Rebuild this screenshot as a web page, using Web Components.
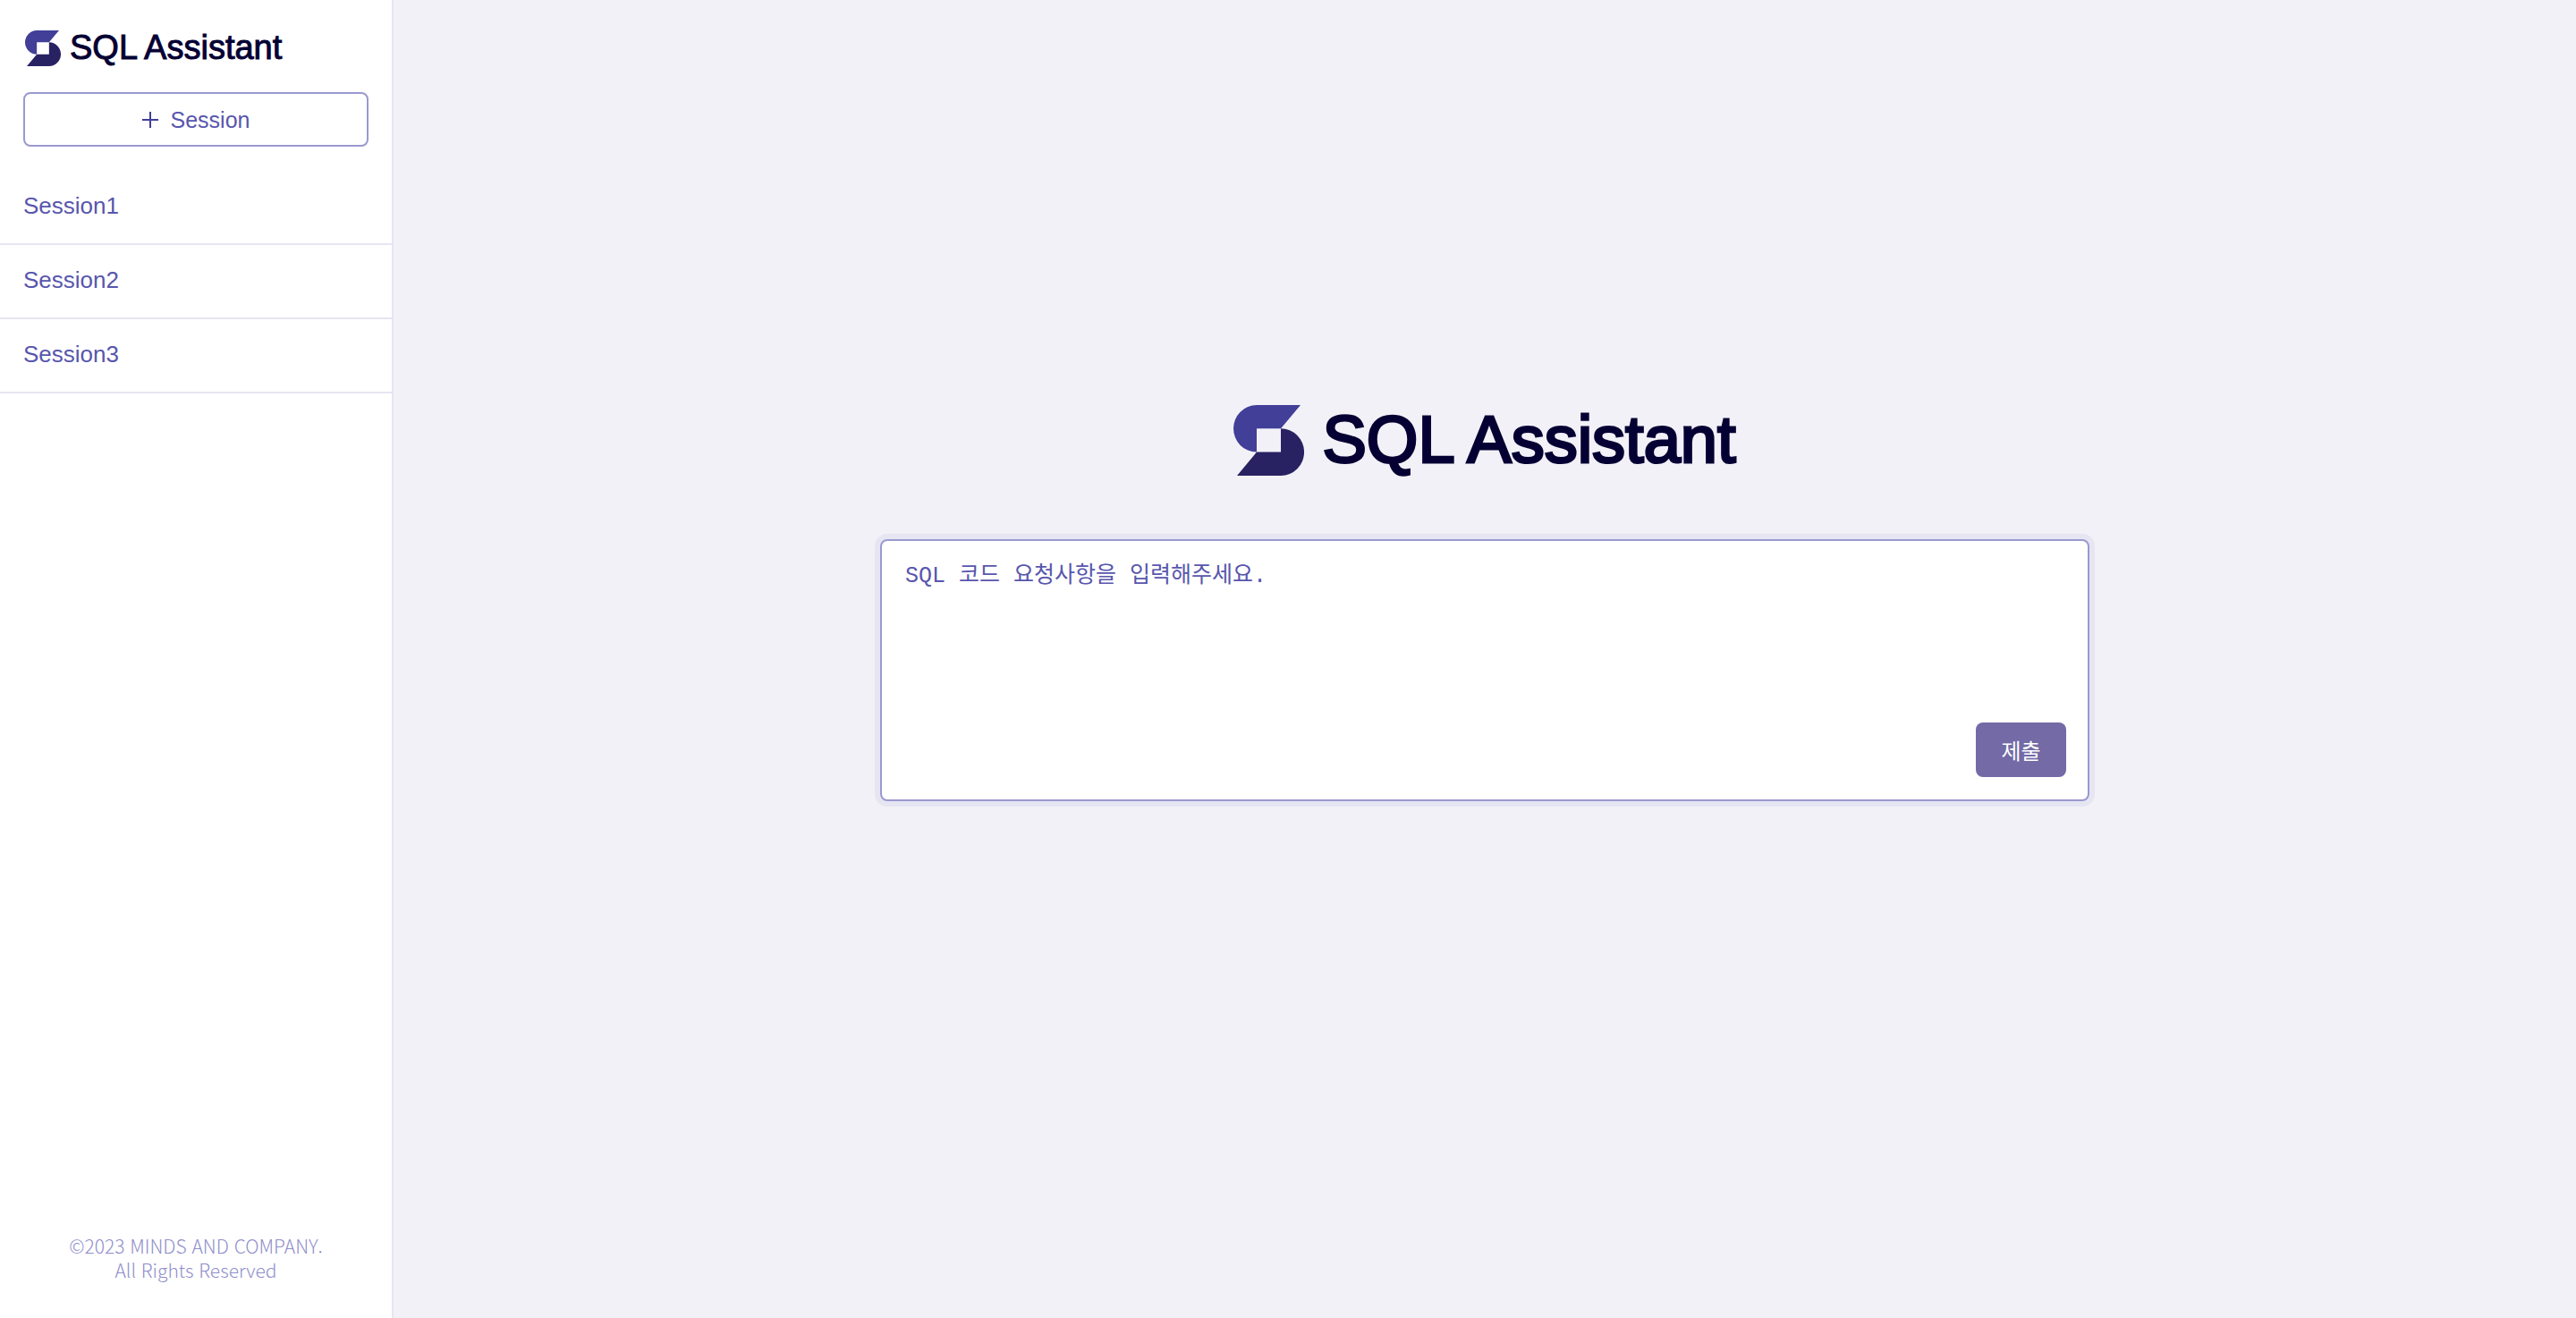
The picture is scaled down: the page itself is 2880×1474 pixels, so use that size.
<!DOCTYPE html>
<html lang="ko">
<head>
<meta charset="utf-8">
<title>SQL Assistant</title>
<style>
  html, body { margin: 0; height: 100%; }
  body { font-family: "Liberation Sans", "Noto Sans CJK KR", sans-serif; color: #5856ad; }
</style>
</head>
<body>
<sql-app></sql-app>
<script>
const define = (name, html) => customElements.define(name, class extends HTMLElement {
  constructor() {
    super();
    this.attachShadow({ mode: "open" }).innerHTML = html;
  }
});

define("brand-logo", `
  <style>
    :host { display: flex; align-items: center; gap: var(--logo-gap, 10px); color: #050033;
      font: var(--logo-font, 38px)/1 "Liberation Sans", sans-serif; white-space: nowrap;
      -webkit-text-stroke: var(--logo-stroke, 1px) currentColor; }
    svg { display: block; width: var(--logo-mark, 40px); height: var(--logo-mark, 40px); flex: none; }
    span { padding-bottom: 2px; }
  </style>
  <svg viewBox="0 0 79 79" aria-hidden="true">
    <path fill="#413f98" d="M26 0H75L53 26.3H26V52.6A26 26.3 0 0 1 26 0Z"/>
    <path fill="#282263" d="M53 26.3A26 26.3 0 0 1 53 79H4L26 52.6H53Z"/>
  </svg>
  <span><slot></slot></span>`);

define("new-session-button", `
  <style>
    :host { display: block; }
    button { box-sizing: border-box; width: 100%; height: 61px; display: flex; align-items: center; justify-content: center;
      gap: 14px; padding: 0; border: 2px solid #9a99d1; border-radius: 8px; background: #fff; color: inherit;
      font: 25px/28px "Liberation Sans", sans-serif; }
    svg { display: block; width: 18px; height: 18px; }
  </style>
  <button type="button">
    <svg viewBox="0 0 18 18" aria-hidden="true"><path d="M9 0V18M0 9H18" stroke="#413f98" stroke-width="2"/></svg>
    <slot></slot>
  </button>`);

define("session-item", `
  <style>
    :host { display: block; border-bottom: 2px solid #e6e5f3; }
    a { display: block; padding: 24px 26px 27px; font-size: 26px; line-height: 30px; color: inherit; text-decoration: none; }
  </style>
  <a href="#"><slot></slot></a>`);

define("side-bar", `
  <style>
    :host { box-sizing: border-box; width: 440px; flex: none; display: flex; flex-direction: column;
      background: #fff; border-right: 2px solid #e6e5f3; }
    header { padding: 34px 26px 27px; display: flex; flex-direction: column; gap: 29px; }
    brand-logo { padding-left: 2px; }
    nav { flex: 1; }
    footer { padding-bottom: 40px; text-align: center; color: #8f8ecb;
      font: 300 21px/27px "Noto Sans CJK KR", sans-serif; }
  </style>
  <header>
    <brand-logo>SQL Assistant</brand-logo>
    <new-session-button>Session</new-session-button>
  </header>
  <nav>
    <session-item>Session1</session-item>
    <session-item>Session2</session-item>
    <session-item>Session3</session-item>
  </nav>
  <footer>©2023 MINDS AND COMPANY.<br>All Rights Reserved</footer>`);

define("prompt-box", `
  <style>
    :host { display: block; }
    form { box-sizing: border-box; display: flex; flex-direction: column; gap: 13px; padding: 24px 24px 25px;
      border: 2px solid #9a99d1; border-radius: 8px; background: #fff; box-shadow: 0 0 0 6px #e6e5f2; }
    textarea { display: block; box-sizing: border-box; width: 100%; height: 166px; padding: 2px 0 0 2px; border: 0; outline: 0; resize: none;
      background: none; color: #5856ad; font: 25px/28px "Liberation Mono", "Noto Sans CJK KR", monospace; }
    textarea::placeholder { color: #5856ad; opacity: 1; }
    button { align-self: flex-end; width: 101px; height: 61px; padding: 0; border: 0; border-radius: 8px;
      background: #736aa6; color: #fff; font: 400 24px/28px "Noto Sans CJK KR", sans-serif; }
  </style>
  <form>
    <textarea aria-label="SQL 코드 요청사항" placeholder="SQL 코드 요청사항을 입력해주세요."></textarea>
    <button type="button">제출</button>
  </form>`);

define("sql-app", `
  <style>
    :host { display: flex; min-height: 100vh; background: #f2f1f7; }
    main { flex: 1; display: flex; flex-direction: column; align-items: center; justify-content: center;
      gap: 71px; padding: 0 48px 125px; }
    brand-logo { --logo-mark: 79px; --logo-font: 74px; --logo-gap: 20px; --logo-stroke: 3px; }
    prompt-box { width: 100%; max-width: 1352px; }
  </style>
  <side-bar></side-bar>
  <main>
    <brand-logo>SQL Assistant</brand-logo>
    <prompt-box></prompt-box>
  </main>`);
</script>
</body>
</html>
